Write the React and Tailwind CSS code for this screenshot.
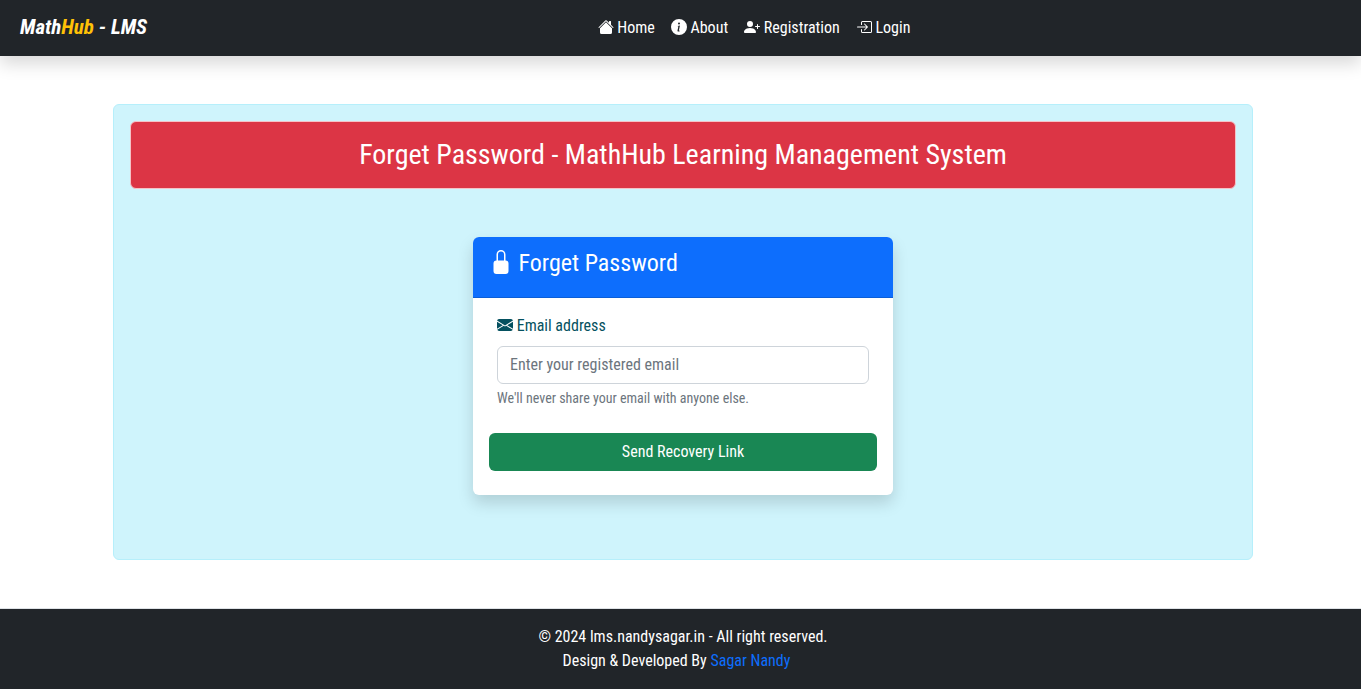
import { BsHouseFill, BsInfoCircleFill, BsPersonPlusFill, BsBoxArrowInRight, BsLockFill, BsEnvelopeFill } from "react-icons/bs";

const links = [
  { label: "Home", Icon: BsHouseFill },
  { label: "About", Icon: BsInfoCircleFill },
  { label: "Registration", Icon: BsPersonPlusFill },
  { label: "Login", Icon: BsBoxArrowInRight },
];

const iconClass = "inline-block align-[-0.125em]";

export default function App() {
  return (
    <div className="bg-white font-['Roboto_Condensed','Liberation_Sans_Narrow','Roboto',sans-serif] text-base text-[#212529]">
      <header className="flex h-14 items-center bg-[#212529] px-5 text-white shadow-[0_8px_16px_rgba(0,0,0,0.15)]">
        <a href="#" className="text-[21px] font-bold italic">
          Math<span className="text-[#ffc107]">Hub</span> - LMS
        </a>
        <nav className="flex flex-1 justify-center gap-4 pl-5">
          {links.map(({ label, Icon }) => (
            <a key={label} href="#">
              <Icon aria-hidden="true" className={iconClass} /> {label}
            </a>
          ))}
        </nav>
      </header>

      <main className="py-12 pl-[5px]">
        <section className="mx-auto max-w-[1140px] rounded-md border border-[#b6effb] bg-[#cff4fc] p-4 pb-16">
          <h1 className="rounded-md border border-[#f5c2c7] bg-[#dc3545] px-4 py-4 text-center text-[28px] leading-[34px] text-white">
            Forget Password - MathHub Learning Management System
          </h1>
          <form className="mx-auto mt-12 max-w-[420px] rounded-md bg-white shadow-[0_8px_16px_rgba(0,0,0,0.15)]">
            <h2 className="h-[61px] rounded-t-md border-b border-[#0b5ed7] bg-[#0d6efd] px-4 pt-3 text-2xl leading-7 text-white">
              <BsLockFill aria-hidden="true" className={iconClass} /> Forget Password
            </h2>
            <div className="px-4 pt-4 pb-6">
              <div className="px-2">
                <label htmlFor="email" className="block text-[#055160]">
                  <BsEnvelopeFill aria-hidden="true" className={iconClass} /> Email address
                </label>
                <input
                  id="email"
                  type="email"
                  placeholder="Enter your registered email"
                  className="mt-2 block w-full rounded-md border border-[#ced4da] bg-white px-3 py-1.5 leading-6 placeholder:text-[#6c757d]"
                />
                <p className="mt-1 text-sm leading-[21px] text-[#6c757d]">We'll never share your email with anyone else.</p>
              </div>
              <button type="button" className="mt-6 h-[38px] w-full rounded-md bg-[#198754] text-white">
                Send Recovery Link
              </button>
            </div>
          </form>
        </section>
      </main>

      <footer className="border-t border-[#dee2e6] bg-[#212529] py-4 pl-[5px] text-center text-white">
        <p>© 2024 lms.nandysagar.in - All right reserved.</p>
        <p className="pr-[13px]">
          Design &amp; Developed By <a href="#" className="text-[#0d6efd]">Sagar Nandy</a>
        </p>
      </footer>
    </div>
  );
}
